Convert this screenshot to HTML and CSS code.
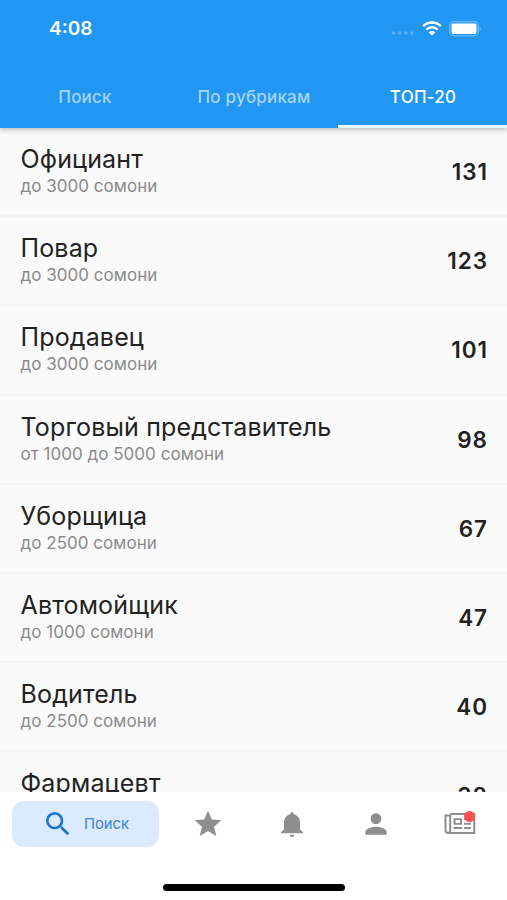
FILE: index.html
```html
<!DOCTYPE html>
<html lang="ru">
<head>
    <meta charset="UTF-8">
    <meta name="viewport" content="width=device-width, initial-scale=1.0">
    <title>ТОП-20</title>
    <link rel="stylesheet" href="styles.css">
</head>
<body>
    <header class="header">
        <div class="status">
            <span class="time">4:08</span>
            <div class="status-icons">
                <svg class="dots" width="24" height="6" viewBox="0 0 24 6"><circle cx="2.5" cy="3" r="1.8"/><circle cx="8.6" cy="3" r="1.8"/><circle cx="14.7" cy="3" r="1.8"/><circle cx="20.8" cy="3" r="1.8"/></svg>
                <svg class="wifi" width="20" height="15" viewBox="0 0 20 15">
                    <path d="M1.2 5.2a12.4 12.4 0 0 1 17.6 0M4.3 8.6a8 8 0 0 1 11.4 0" fill="none" stroke="#fff" stroke-width="2.5"/>
                    <path d="M6.8 11.4a4.6 4.6 0 0 1 6.4 0L10 14.6z" fill="#fff"/>
                </svg>
                <svg class="battery" width="33" height="16" viewBox="0 0 33 16">
                    <rect x=".7" y=".7" width="28.6" height="14" rx="4.2" fill="none" stroke="#fff" stroke-opacity=".3" stroke-width="1.4"/>
                    <rect x="2.5" y="2.5" width="25" height="10.5" rx="2" fill="#fff"/>
                    <path d="M30.7 5.3q2 2.3 0 4.8z" fill="#fff" fill-opacity=".5"/>
                </svg>
            </div>
        </div>
        <nav class="tabs">
            <a class="tab">Поиск</a>
            <a class="tab">По рубрикам</a>
            <a class="tab active">ТОП-20</a>
        </nav>
    </header>

    <main class="list">
        <div class="row"><div><div class="title">Официант</div><div class="salary">до 3000 сомони</div></div><div class="count">131</div></div>
        <div class="row"><div><div class="title">Повар</div><div class="salary">до 3000 сомони</div></div><div class="count">123</div></div>
        <div class="row"><div><div class="title">Продавец</div><div class="salary">до 3000 сомони</div></div><div class="count">101</div></div>
        <div class="row"><div><div class="title">Торговый представитель</div><div class="salary">от 1000 до 5000 сомони</div></div><div class="count">98</div></div>
        <div class="row"><div><div class="title">Уборщица</div><div class="salary">до 2500 сомони</div></div><div class="count">67</div></div>
        <div class="row"><div><div class="title">Автомойщик</div><div class="salary">до 1000 сомони</div></div><div class="count">47</div></div>
        <div class="row"><div><div class="title">Водитель</div><div class="salary">до 2500 сомони</div></div><div class="count">40</div></div>
        <div class="row"><div><div class="title">Фармацевт</div></div><div class="count">38</div></div>
    </main>

    <footer class="bottom">
        <nav class="nav">
            <a class="nav-item current">
                <svg width="32" height="32" viewBox="0 0 24 24"><path d="M15.5 14h-.79l-.28-.27A6.47 6.47 0 0 0 16 9.5 6.5 6.5 0 1 0 9.5 16c1.61 0 3.09-.59 4.23-1.57l.27.28v.79l5 4.99L20.49 19l-4.99-5zm-6 0C7.01 14 5 11.99 5 9.5S7.01 5 9.5 5 14 7.01 14 9.5 11.99 14 9.5 14z"/></svg>
                <span>Поиск</span>
            </a>
            <a class="nav-item">
                <svg width="32" height="32" viewBox="0 0 24 24"><path d="M12 17.27 18.18 21l-1.64-7.03L22 9.24l-7.19-.61L12 2 9.19 8.63 2 9.24l5.46 4.73L5.82 21z"/></svg>
            </a>
            <a class="nav-item">
                <svg width="32" height="32" viewBox="0 0 24 24"><path d="M10.1 20.1h3.8q-.5 1.7-1.9 1.7t-1.9-1.7zM18 16v-5c0-3.07-1.64-5.64-4.5-6.32L12 2.5l-1.5 2.18C7.63 5.36 6 7.92 6 11v5l-2.2 2.2v.8h16.4v-.8z"/></svg>
            </a>
            <a class="nav-item">
                <svg width="32" height="32" viewBox="0 0 24 24"><path d="M12 12c2.21 0 4-1.79 4-4s-1.79-4-4-4-4 1.79-4 4 1.79 4 4 4zm0 2c-2.67 0-8 1.34-8 4v2h16v-2c0-2.66-5.33-4-8-4z"/></svg>
            </a>
            <a class="nav-item news">
                <svg width="32" height="24" viewBox="0 0 32 24">
                    <path d="M6.2 2h24v19H4.2q-2.7 0-2.7-2.7V3.6h4.7v14.7q0 2.7-2 2.7" fill="none" stroke="#8e8e91" stroke-width="2"/>
                    <path d="M9.5 6.2H18v6.6H9.5zM11.6 8.1v2.8h4.3V8.1zM20 6.2h7v1.9h-7zM20 10.7h7v2.1h-7zM9.5 15h8.5v2.1H9.5zM20 15h7v2.1h-7z" fill-rule="evenodd"/>
                </svg>
                <i class="badge"></i>
            </a>
        </nav>
        <div class="home-bar"></div>
    </footer>
</body>
</html>
```
FILE: styles.css
```css
* { box-sizing: border-box; }
body { margin: 0; height: 900px; display: flex; flex-direction: column; overflow: hidden; background: #fafafa; font-family: Inter, "Liberation Sans", sans-serif; color: #222; }
svg { display: block; }

.header { position: relative; flex: none; height: 128px; background: #2196f3; color: #fff; box-shadow: 0 2px 5px rgba(0, 0, 0, .25); display: flex; flex-direction: column; justify-content: space-between; }
.status { height: 57px; padding: 0 25px 0 49px; display: flex; align-items: center; justify-content: space-between; }
.time { font-size: 19px; font-weight: 600; }
.status-icons { display: flex; align-items: center; }
.dots { fill: #fff; opacity: .25; margin: 9px 7px 0 0; }
.wifi { margin-right: 7px; }
.tabs { display: flex; height: 62px; }
.tab { flex: 1; display: flex; align-items: center; justify-content: center; padding: 3px 0 0 1px; font-size: 17px; font-weight: 500; letter-spacing: .2px; color: #a6d5fa; border-bottom: 3px solid transparent; }
.tab.active { color: #fff; border-color: #e9f7ff; }

.list { flex: 1; min-height: 0; overflow: hidden; }
.row { height: 89.2px; padding: 15px 20px 0 20.5px; display: flex; justify-content: space-between; border-bottom: 2px solid #f5f5f5; }
.title { font-size: 25px; line-height: 32px; letter-spacing: .15px; }
.salary { font-size: 17px; line-height: 22px; letter-spacing: .03px; color: #8a8a8a; }
.count { font-size: 22.5px; line-height: 58px; font-weight: 600; letter-spacing: .9px; margin-right: -.9px; }

.bottom { flex: none; height: 108px; padding: 9px 5px 0 12px; background: #fff; display: flex; flex-direction: column; align-items: center; }
.nav { width: 100%; display: flex; }
.nav-item { flex: 1; height: 46px; display: flex; align-items: center; justify-content: center; fill: #8e8e91; }
.nav-item.current { flex: none; width: 147px; margin-right: 7px; gap: 10px; border-radius: 12px; background: #dbeafe; fill: #1976d2; color: #3983dc; font-size: 14.8px; }
.news { position: relative; }
.badge { position: absolute; left: 46px; top: 10px; width: 11px; height: 11px; border-radius: 50%; background: #ff4f50; }
.home-bar { width: 182px; height: 7px; margin: 37px 7px 0 0; border-radius: 4px; background: #000; }
```
